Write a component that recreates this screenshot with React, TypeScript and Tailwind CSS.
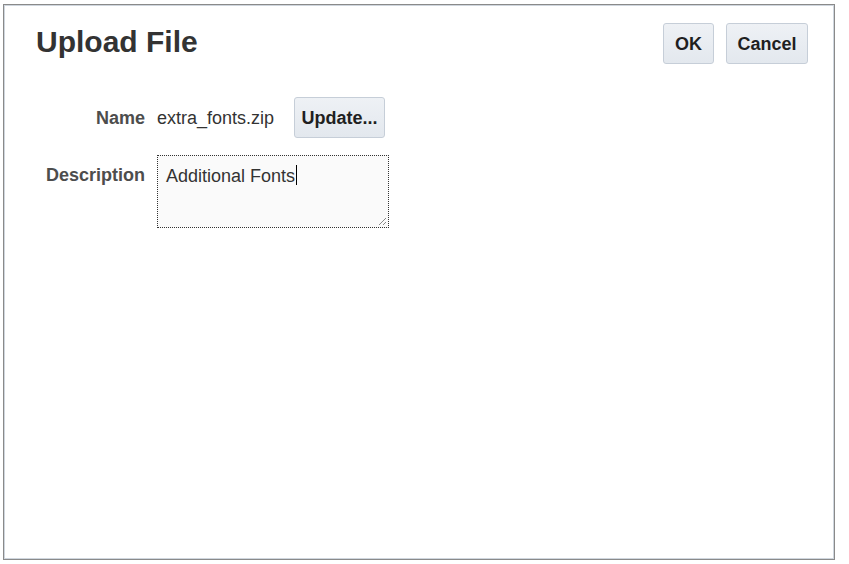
import React from "react";

const font = { fontFamily: '"Liberation Sans", Arial, sans-serif' };

function Button({ children, className = "" }: { children: React.ReactNode; className?: string }) {
  return (
    <button
      className={`h-[41px] rounded-[3px] border border-[#c6ced8] bg-[linear-gradient(#eef1f5,#e3e8ee)] text-[18px] font-bold leading-none text-[#1f1f1f] ${className}`}
    >
      {children}
    </button>
  );
}

export default function App() {
  return (
    <div className="h-[564px] w-[849px] bg-white pl-[3px] pt-[4px]" style={font}>
      {/* dialog frame */}
      <div className="flex h-[556px] w-[832px] flex-col border border-[#8a8a8a] bg-white shadow-[inset_0_0_0_1px_#cfd6de]">
        {/* header */}
        <div className="flex items-start justify-between pl-[32px] pr-[26px] pt-[18px]">
          <h1 className="pt-[4px] text-[30px] font-bold leading-[30px] text-[#333]">Upload File</h1>
          <div className="flex gap-3">
            <Button className="w-[51px]">OK</Button>
            <Button className="w-[82px]">Cancel</Button>
          </div>
        </div>

        {/* form */}
        <div className="mt-[33px] grid grid-cols-[auto_auto] justify-start gap-x-[12px] gap-y-[17px] pl-[42px]">
          <div className="self-center text-right text-[18px] font-bold leading-5 text-[#4d4d4d]">Name</div>
          <div className="flex items-center">
            <span className="text-[18px] leading-5 text-[#333]">extra_fonts.zip</span>
            <Button className="ml-[20px] w-[91px]">Update...</Button>
          </div>

          <div className="pt-[10px] text-right text-[18px] font-bold leading-5 text-[#4d4d4d]">Description</div>
          <div className="relative h-[73px] w-[232px] border border-dotted border-[#333] bg-[#fafafa] bg-[radial-gradient(#e6e6e6_0.6px,transparent_0.6px)] bg-size-[2px_2px] px-2 pt-[9px]">
            <span className="text-[18px] leading-5 text-[#333]">Additional Fonts</span>
            <span className="ml-[1px] inline-block h-[20px] w-px bg-black align-top" />
            <svg className="absolute bottom-[1px] right-[1px]" width="9" height="9" viewBox="0 0 9 9">
              <path d="M8 1 L1 8 M8 5 L5 8" stroke="#8a8a8a" strokeWidth="1" />
            </svg>
          </div>
        </div>
      </div>
    </div>
  );
}
